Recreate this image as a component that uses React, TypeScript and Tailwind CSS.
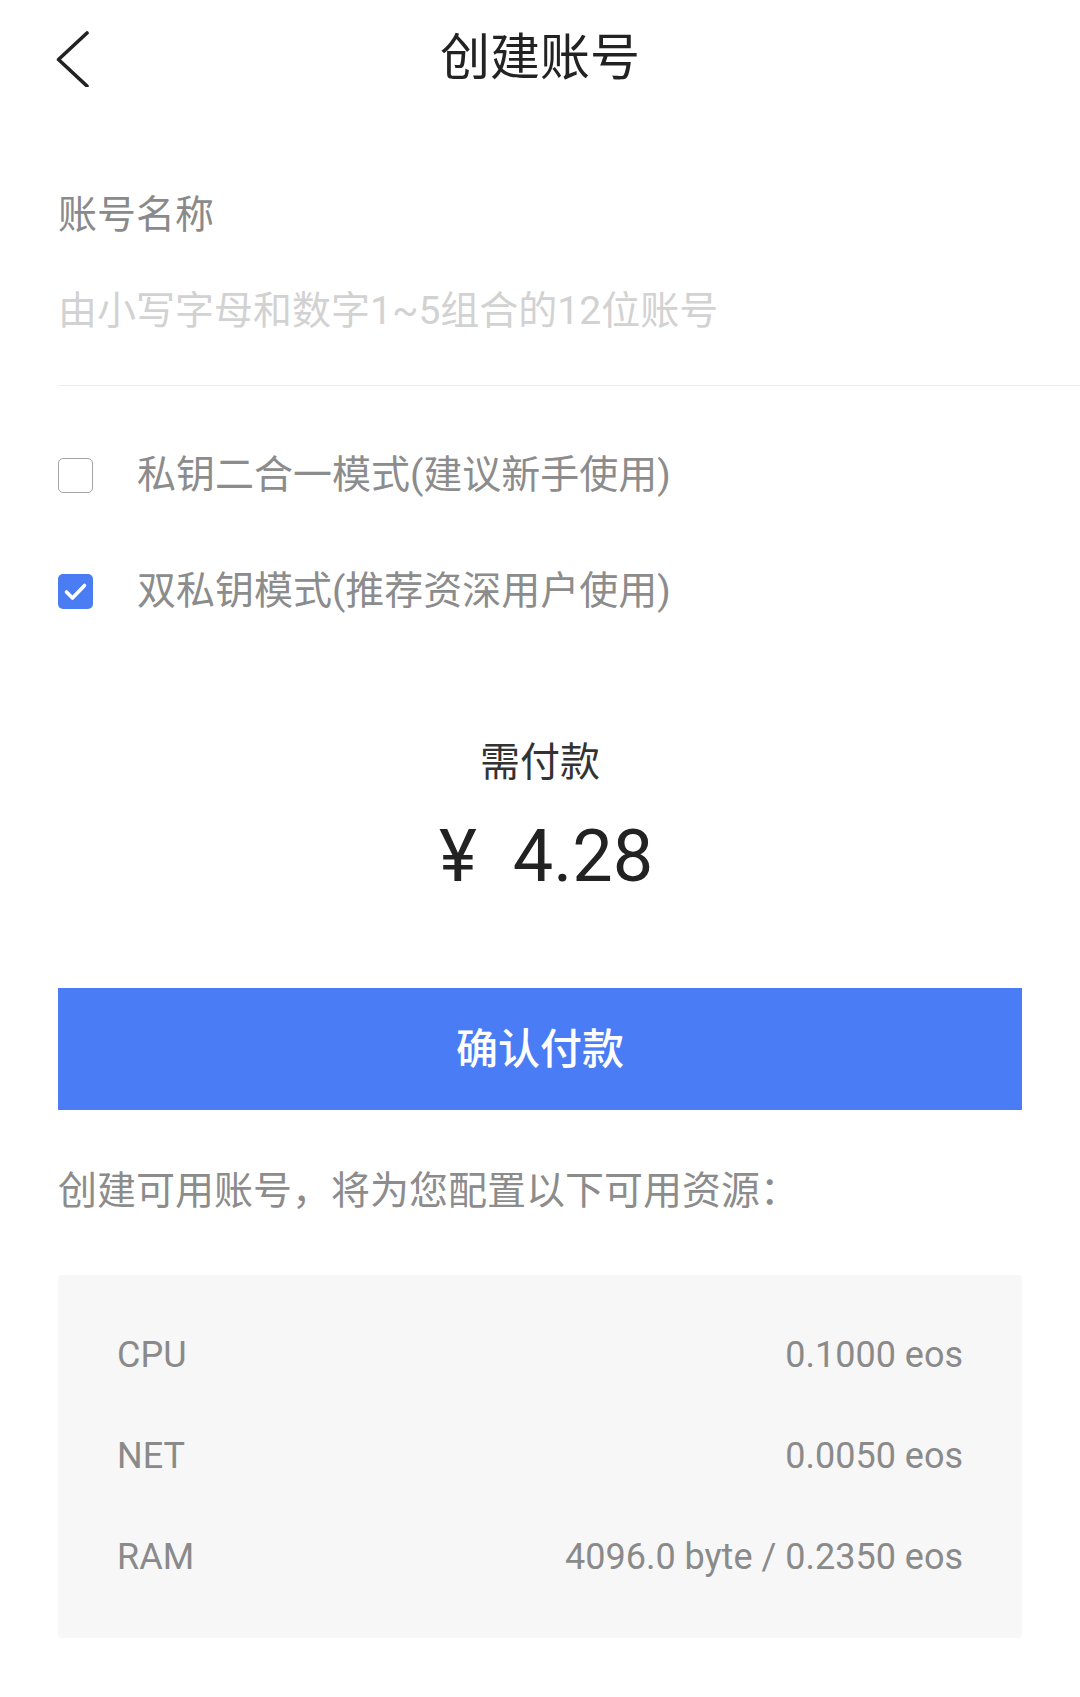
import React, { useState } from "react";

const resources = [
  { name: "CPU", value: "0.1000 eos" },
  { name: "NET", value: "0.0050 eos" },
  { name: "RAM", value: "4096.0 byte / 0.2350 eos" },
];

const modes = [
  { id: "single", label: "私钥二合一模式(建议新手使用)" },
  { id: "double", label: "双私钥模式(推荐资深用户使用)" },
];

const Checkbox = ({ checked }: { checked: boolean }) =>
  checked ? (
    <div className="w-[35px] h-[35px] rounded-[5px] bg-[#4a7cf3] flex items-center justify-center shrink-0">
      <svg width="35" height="35" viewBox="0 0 35 35" fill="none">
        <path
          d="M8.5 18 L14.5 24 L26.5 11.5"
          stroke="white"
          strokeWidth="3.6"
          strokeLinecap="round"
          strokeLinejoin="round"
        />
      </svg>
    </div>
  ) : (
    <div className="w-[35px] h-[35px] rounded-[5px] border-[1.5px] border-[#a3a3a3] bg-white shrink-0" />
  );

const App = () => {
  const [mode, setMode] = useState("double");
  const [account, setAccount] = useState("");

  return (
    <div
      className="w-[1080px] h-[1697px] bg-white overflow-hidden"
      style={{ fontFamily: 'Roboto, "Noto Sans CJK SC", sans-serif' }}
    >
      {/* header */}
      <header className="grid grid-cols-[1fr_auto_1fr] items-center h-[116px]">
        <div className="pl-[56px] flex items-center">
          <svg width="34" height="58" viewBox="0 0 34 58" fill="none">
            <path
              d="M31 4 L2.5 30.5 L31 57"
              stroke="#222"
              strokeWidth="3.6"
              strokeLinecap="round"
              strokeLinejoin="round"
            />
          </svg>
        </div>
        <h1 className="text-[50px] leading-[60px] text-[#222] font-normal">创建账号</h1>
        <div />
      </header>

      <main className="pl-[58px]">
        <div className="mt-[69px] text-[39px] leading-[60px] text-[#8a8a8a]">账号名称</div>

        <div className="mt-[36px] pb-[44px] border-b border-[#ececec]">
          <input
            value={account}
            onChange={(e) => setAccount(e.target.value)}
            placeholder="由小写字母和数字1~5组合的12位账号"
            className="w-full h-[60px] text-[39px] leading-[60px] outline-none bg-transparent text-[#333] placeholder:text-[#d2d2d2]"
          />
        </div>

        <div className="pr-[58px]">
          <div className="mt-[31px]">
            {modes.map((m) => (
              <div
                key={m.id}
                className="h-[116px] flex items-center gap-[44px] cursor-pointer"
                onClick={() => setMode(m.id)}
              >
                <Checkbox checked={mode === m.id} />
                <span className="text-[39px] leading-[60px] text-[#8c8c8c]">{m.label}</span>
              </div>
            ))}
          </div>

          <div className="mt-[84px] text-center text-[40px] leading-[60px] text-[#333]">需付款</div>
          <div className="mt-[19px] pl-[12px] flex justify-center text-[72px] leading-[90px] text-[#222]">
            <span className="mr-[36px]">¥</span>
            <span>4.28</span>
          </div>

          <button className="mt-[86px] w-full h-[122px] bg-[#4a7cf6] text-white text-[42px] font-medium flex items-center justify-center">
            确认付款
          </button>

          <div className="mt-[51px] text-[39px] leading-[60px] text-[#8c8c8c]">
            创建可用账号，将为您配置以下可用资源：
          </div>

          <div className="mt-[54px] bg-[#f7f7f7] rounded-[4px] px-[59px] pt-[29px] pb-[31px]">
            {resources.map((r) => (
              <div key={r.name} className="h-[101px] flex items-center justify-between text-[36px] text-[#8a8a8a]">
                <span>{r.name}</span>
                <span>{r.value}</span>
              </div>
            ))}
          </div>
        </div>
      </main>
    </div>
  );
};

export default App;
